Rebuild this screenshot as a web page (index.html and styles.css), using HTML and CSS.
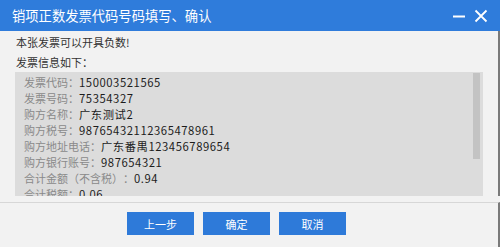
FILE: index.html
```html
<!DOCTYPE html>
<html lang="zh-CN">
<head>
<meta charset="utf-8">
<title>销项正数发票代码号码填写、确认</title>
<link rel="stylesheet" href="styles.css">
</head>
<body>
<div class="dialog">
  <div class="titlebar">
    <span class="title">销项正数发票代码号码填写<span class="comma">、</span>确认</span>
    <div class="controls">
      <svg class="ctl" width="14" height="14" viewBox="0 0 14 14"><line x1="1" y1="7.5" x2="13" y2="7.5" stroke="#fff" stroke-width="2"/></svg>
      <svg class="ctl" width="14" height="14" viewBox="0 0 14 14"><path d="M1.5 1.5 L12.5 12.5 M12.5 1.5 L1.5 12.5" stroke="#fff" stroke-width="1.8" fill="none"/></svg>
    </div>
  </div>
  <div class="content">
    <p class="msg">本张发票可以开具负数!</p>
    <p class="msg">发票信息如下<span class="colon">：</span></p>
    <div class="box">
      <div class="rows">
        <div class="row"><span class="lbl">发票代码<span class="colon">：</span></span><span class="val">150003521565</span></div>
        <div class="row"><span class="lbl">发票号码<span class="colon">：</span></span><span class="val">75354327</span></div>
        <div class="row"><span class="lbl">购方名称<span class="colon">：</span></span><span class="val">广东测试2</span></div>
        <div class="row"><span class="lbl">购方税号<span class="colon">：</span></span><span class="val">98765432112365478961</span></div>
        <div class="row"><span class="lbl">购方地址电话<span class="colon">：</span></span><span class="val">广东番禺123456789654</span></div>
        <div class="row"><span class="lbl">购方银行账号<span class="colon">：</span></span><span class="val">987654321</span></div>
        <div class="row"><span class="lbl">合计金额<span class="pl">（</span>不含税<span class="pr">）</span><span class="colon">：</span></span><span class="val">0.94</span></div>
        <div class="row"><span class="lbl">合计税额<span class="colon">：</span></span><span class="val">0.06</span></div>
      </div>
      <div class="scrollbar"></div>
    </div>
  </div>
  <div class="footer">
    <button class="btn">上一步</button>
    <button class="btn">确定</button>
    <button class="btn">取消</button>
  </div>
</div>
</body>
</html>
```

FILE: styles.css
```css
html, body {
  margin: 0;
  padding: 0;
}
body {
  width: 500px;
  height: 247px;
  overflow: hidden;
  background: #f2f2f2;
  font-family: "Noto Sans CJK SC", "Microsoft YaHei", sans-serif;
}
.dialog {
  width: 500px;
  height: 247px;
  display: flex;
  flex-direction: column;
  background: #f2f2f2;
  box-sizing: border-box;
}
.titlebar {
  height: 31px;
  flex: none;
  background: #2f7cdb;
  display: flex;
  align-items: center;
  justify-content: space-between;
  padding: 0 12px 0 12px;
  box-sizing: border-box;
}
.title {
  color: #fff;
  font-size: 13.3px;
  line-height: 31px;
}
.comma {
  display: inline-block;
  width: 13.3px;
  text-align: left;
}
.controls {
  display: flex;
  align-items: center;
  gap: 8px;
  padding-top: 1px;
}
.ctl {
  display: block;
}
.content {
  padding: 1px 15px 0 15px;
  border-right: 2px solid #7a7a7a;
}
.msg {
  margin: 0;
  padding-left: 1px;
  font-size: 11px;
  line-height: 20px;
  height: 20px;
  color: #333;
}
.colon {
  display: inline-block;
  width: 11px;
  text-align: center;
}
.pl {
  display: inline-block;
  width: 11px;
  text-align: right;
}
.pr {
  display: inline-block;
  width: 11px;
  text-align: left;
}
.box {
  position: relative;
  width: 468px;
  height: 124px;
  background: #dcdcdc;
  overflow: hidden;
}
.rows {
  padding: 2px 0 0 9px;
}
.row {
  height: 16px;
  line-height: 16px;
  font-size: 11px;
  white-space: nowrap;
}
.lbl {
  color: #8a8a8a;
}
.val {
  color: #1c1c1c;
  letter-spacing: 0.55px;
  font-size: 11.3px;
}
.scrollbar {
  position: absolute;
  top: 1px;
  right: 3px;
  width: 7px;
  height: 86px;
  background: #c3c3c3;
}
.footer {
  flex: 1;
  margin-top: 6px;
  border-top: 1px solid #d7d7d7;
  border-right: 2px solid #7a7a7a;
  display: flex;
  align-items: flex-start;
  gap: 9px;
  padding: 9px 0 0 127px;
}
.btn {
  width: 67px;
  height: 23px;
  border: none;
  background: #2e7ad9;
  color: #fff;
  font-family: "Noto Sans CJK SC", sans-serif;
  font-size: 11px;
  padding: 0;
  margin: 0;
}
```
